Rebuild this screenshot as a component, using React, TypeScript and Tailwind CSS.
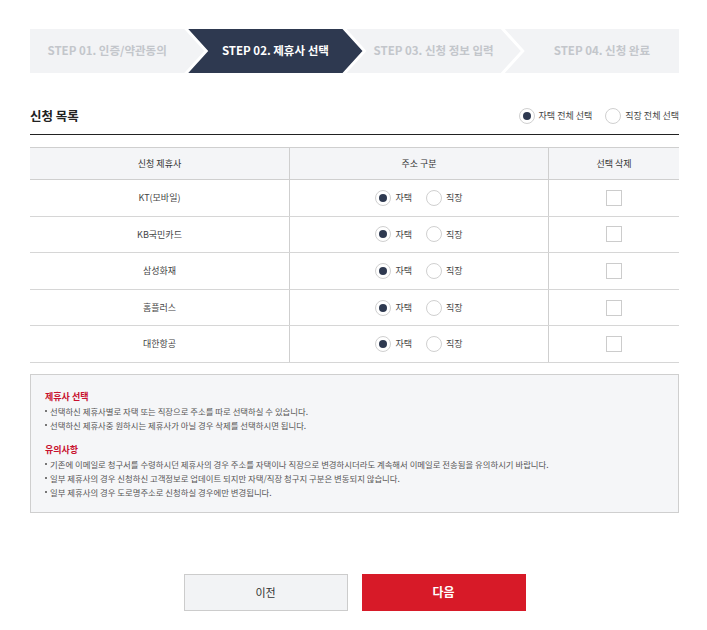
import React from 'react';

const STEPS = [
  'STEP 01. 인증/약관동의',
  'STEP 02. 제휴사 선택',
  'STEP 03. 신청 정보 입력',
  'STEP 04. 신청 완료',
];

const PARTNERS = ['KT(모바일)', 'KB국민카드', '삼성화재', '홈플러스', '대한항공'];

// chevron shapes for the step bar
const CLIP_FIRST = '[clip-path:polygon(0_0,calc(100%-20px)_0,100%_50%,calc(100%-20px)_100%,0_100%)]';
const CLIP_MID = '[clip-path:polygon(0_0,calc(100%-20px)_0,100%_50%,calc(100%-20px)_100%,0_100%,20px_50%)]';
const CLIP_LAST = '[clip-path:polygon(0_0,100%_0,100%_100%,0_100%,20px_50%)]';

const Radio = ({ checked, label }: { checked?: boolean; label: string }) => (
  <label className="flex items-center gap-[4px]">
    <span className="flex h-[16px] w-[16px] items-center justify-center rounded-full border border-[#d0d0d0] bg-white">
      {checked && <span className="h-[8px] w-[8px] rounded-full bg-[#2e3950]" />}
    </span>
    <span className="text-[9px] text-[#444]">{label}</span>
  </label>
);

const Bullet = ({ children }: { children: React.ReactNode }) => (
  <li className="flex items-center gap-[3px] leading-[14px]">
    <span className="h-[2px] w-[2px] bg-[#777]" />
    <span>{children}</span>
  </li>
);

export default function App() {
  return (
    <div
      className="min-h-[630px] bg-white text-[#333]"
      style={{ fontFamily: '"Noto Sans CJK KR", "Noto Sans", sans-serif' }}
    >
      <div className="ml-[30px] w-[649px] pt-[29px]">
        {/* Steps */}
        <div className="flex h-[44px]">
          {STEPS.map((step, i) => {
            const active = i === 1;
            const first = i === 0;
            const last = i === STEPS.length - 1;
            const clip = first ? CLIP_FIRST : last ? CLIP_LAST : CLIP_MID;
            return (
              <div
                key={step}
                className={`flex w-[174.25px] shrink-0 items-center justify-center text-[11.5px] font-bold ${clip} ${
                  first ? '' : 'ml-[-16px] pl-[20px]'
                } ${last ? '' : 'pr-[20px]'} ${
                  active ? 'bg-[#2e3950] text-white' : 'bg-[#f2f3f5] text-[#c3c6cb]'
                }`}
              >
                {step}
              </div>
            );
          })}
        </div>

        {/* Title */}
        <div className="mt-[32px] flex h-[22px] items-center justify-between">
          <h2 className="text-[12.5px] font-bold text-[#222]">신청 목록</h2>
          <div className="flex items-center gap-[13px]">
            <Radio checked label="자택 전체 선택" />
            <Radio label="직장 전체 선택" />
          </div>
        </div>
        <div className="mt-[7px] h-px bg-[#222]" />

        {/* Table */}
        <div className="mt-[12px] text-[9px]">
          <div className="grid h-[33px] grid-cols-[260px_259px_130px] border-y border-[#cfcfcf] bg-[#f4f5f7]">
            <div className="flex items-center justify-center border-r border-[#cfcfcf]">신청 제휴사</div>
            <div className="flex items-center justify-center border-r border-[#cfcfcf]">주소 구분</div>
            <div className="flex items-center justify-center">선택 삭제</div>
          </div>
          {PARTNERS.map((name) => (
            <div
              key={name}
              className="grid h-[36.6px] grid-cols-[260px_259px_130px] border-b border-[#d6d6d6]"
            >
              <div className="flex items-center justify-center border-r border-[#cfcfcf] text-[#444]">
                {name}
              </div>
              <div className="flex items-center justify-center gap-[14px] border-r border-[#cfcfcf]">
                <Radio checked label="자택" />
                <Radio label="직장" />
              </div>
              <div className="flex items-center justify-center">
                <span className="h-[16px] w-[16px] border border-[#cccccc] bg-white" />
              </div>
            </div>
          ))}
        </div>

        {/* Notice */}
        <div className="mt-[11px] h-[139px] border border-[#cfcfcf] bg-[#f5f6f8] px-[14px] pt-[14px] text-[8.4px] text-[#555]">
          <p className="text-[9px] font-bold leading-[15px] text-[#c8102e]">제휴사 선택</p>
          <ul>
            <Bullet>선택하신 제휴사별로 자택 또는 직장으로 주소를 따로 선택하실 수 있습니다.</Bullet>
            <Bullet>선택하신 제휴사중 원하시는 제휴사가 아닐 경우 삭제를 선택하시면 됩니다.</Bullet>
          </ul>
          <p className="mt-[10px] text-[9px] font-bold leading-[15px] text-[#c8102e]">유의사항</p>
          <ul>
            <Bullet>
              기존에 이메일로 청구서를 수령하시던 제휴사의 경우 주소를 자택이나 직장으로 변경하시더라도 계속해서 이메일로 전송됨을 유의하시기 바랍니다.
            </Bullet>
            <Bullet>일부 제휴사의 경우 신청하신 고객정보로 업데이트 되지만 자택/직장 청구지 구분은 변동되지 않습니다.</Bullet>
            <Bullet>일부 제휴사의 경우 도로명주소로 신청하실 경우에만 변경됩니다.</Bullet>
          </ul>
        </div>

        {/* Buttons */}
        <div className="mt-[61px] flex justify-center gap-[14px]">
          <button className="h-[37px] w-[164px] border border-[#cccccc] bg-[#f2f3f5] text-[11px] text-[#333]">
            이전
          </button>
          <button className="h-[37px] w-[164px] bg-[#d71a28] text-[12px] font-bold text-white">
            다음
          </button>
        </div>
      </div>
    </div>
  );
}
